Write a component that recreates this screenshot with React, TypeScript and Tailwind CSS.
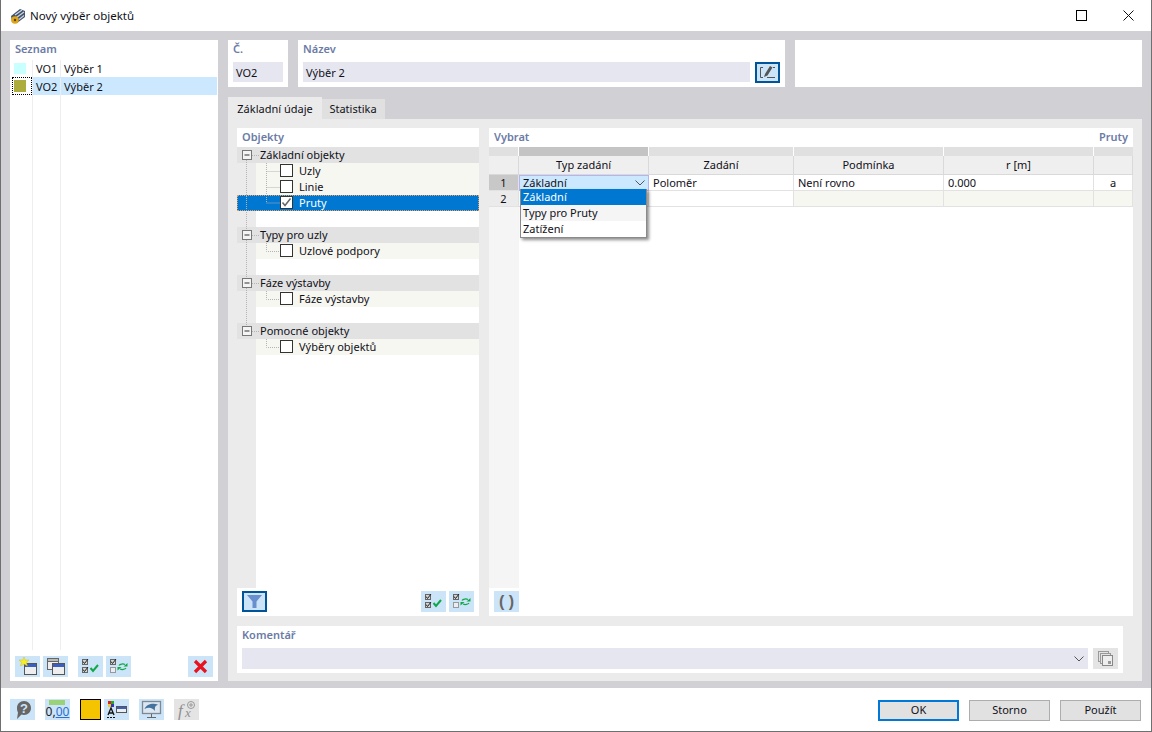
import React from 'react';

const IconBtn: React.FC<{ gray?: boolean; active?: boolean; className?: string; children?: React.ReactNode }> = ({ gray, active, className, children }) => (
  <div
    className={`w-[25px] h-[21px] flex items-center justify-center shrink-0 ${gray ? 'bg-[#e4e4e4]' : 'bg-[#cce4f7]'} ${active ? 'border-2 border-[#005499]' : ''} ${className || ''}`}
  >
    {children}
  </div>
);

const CheckAll = () => (
  <svg width="21" height="17" viewBox="0 0 21 17">
    <rect x="2.500" y="1.500" width="5" height="5" fill="#d4d4d4" stroke="#666" />
    <rect x="2.500" y="9.500" width="5" height="5" fill="#d4d4d4" stroke="#666" />
    <path d="M3 3.500l1.500 2L8 1M3 11.500l1.500 2L8 9" fill="none" stroke="#222" />
    <path d="M10.500 10l2.500 3 5-6" fill="none" stroke="#12a84a" strokeWidth="2" />
  </svg>
);

const CheckSwap = () => (
  <svg width="21" height="17" viewBox="0 0 21 17">
    <rect x="2.500" y="1.500" width="5" height="5" fill="#d4d4d4" stroke="#666" />
    <rect x="2.500" y="9.500" width="5" height="5" fill="#e8eef4" stroke="#999" />
    <path d="M3 3.500l1.500 2L8 1" fill="none" stroke="#222" />
    <path d="M11 7.500c1-1.500 4-2 6-1M18 10c-1 1.500-4 2-6 1" fill="none" stroke="#12a84a" strokeWidth="1.300" />
    <path d="M15.500 8.500h4v-3.500zM13.500 9h-4v3.500z" fill="#12a84a" />
  </svg>
);

const Windows = () => (
  <svg width="20" height="19" viewBox="0 0 20 19">
    <rect x="1.500" y="1.500" width="11" height="11" fill="#eee" stroke="#666" />
    <rect x="1.500" y="1.500" width="11" height="3" fill="#bbb" stroke="#666" />
    <rect x="6.500" y="6.500" width="12" height="11" fill="#eee" stroke="#555" />
    <rect x="7" y="7" width="11" height="3" fill="#3b5fc0" />
  </svg>
);

const NewWindow = () => (
  <svg width="20" height="19" viewBox="0 0 20 19">
    <rect x="6.500" y="6.500" width="12" height="11" fill="#eee" stroke="#555" />
    <rect x="7" y="7" width="11" height="3" fill="#3b5fc0" />
    <path d="M6 0l1.300 3.200L11 3 8.400 5.400 9.500 9 6 7 2.500 9l1.100-3.600L1 3l3.700.2z" fill="#f7ee2a" stroke="#c9b800" strokeWidth=".4" />
  </svg>
);

const Chevron = ({ color = '#555' }: { color?: string }) => (
  <svg width="10" height="6" viewBox="0 0 10 6">
    <path d="M.5.5L5 5 9.500.5" fill="none" stroke={color} />
  </svg>
);

const Label: React.FC<{ className?: string; children: React.ReactNode }> = ({ className, children }) => (
  <div className={`text-[#6b7ba6] font-semibold leading-[16px] ${className || ''}`}>{children}</div>
);

const GroupRow = ({ label }: { label: string }) => (
  <div className="h-[16px] bg-[#e2e2e2] flex items-center pl-[23px] pb-[2px] leading-none">{label}</div>
);

const ChildRow = ({ label, selected, checked }: { label: string; selected?: boolean; checked?: boolean }) => (
  <div
    className={`h-[16px] flex items-center pb-[2px] ${selected ? 'bg-[#0077d0] text-white outline-1 outline-dotted -outline-offset-1 outline-[#e9a05a]' : 'ml-[19px] bg-[#f7f7f2]'}`}
  >
    <div className={`${selected ? 'ml-[43px]' : 'ml-[24px]'} w-[13px] h-[13px] border border-[#333] bg-white flex items-center justify-center shrink-0`}>
      {checked && (
        <svg width="11" height="11" viewBox="0 0 11 11">
          <path d="M1.500 5.500l2.500 3 5.500-7" fill="none" stroke="#666" strokeWidth="1.500" />
        </svg>
      )}
    </div>
    <span className="ml-[6px] leading-none">{label}</span>
  </div>
);

const Blank = () => <div className="h-[16px]" />;

const TreeLines = () => (
  <svg className="absolute left-0 top-0 pointer-events-none" width="50" height="210" viewBox="0 0 50 210">
    <g fill="none" stroke="#b4b4b4" strokeDasharray="1 1">
      <path d="M9.500 13V181" />
      <path d="M15 8.500h7M15 88.500h7M15 136.500h7M15 184.500h7" />
      <path d="M29.500 16V56H43M29.500 24.500H43M29.500 40.500H43" />
      <path d="M29.500 96V104.500H43M29.500 144V152.500H43M29.500 192V200.500H43" />
    </g>
    {[3, 83, 131, 179].map(y => (
      <g key={y}>
        <rect x="5.500" y={y + 0.5} width="9" height="9" fill="#f4f4f4" stroke="#777" />
        <path d={`M7.500 ${y + 5}h5`} stroke="#333" />
      </g>
    ))}
  </svg>
);

const HeadCell: React.FC<{ className?: string; children?: React.ReactNode }> = ({ className, children }) => (
  <div className={`bg-[#efefef] border-r border-b border-[#d9d9d9] flex items-center justify-center h-[19px] pt-[1px] ${className || ''}`}>{children}</div>
);

const Cell: React.FC<{ className?: string; children?: React.ReactNode }> = ({ className, children }) => (
  <div className={`border-r border-b border-[#e2e2e2] flex items-center pl-[4px] pt-[1px] h-[16px] ${className || ''}`}>{children}</div>
);

const BottomIcons = () => (
  <div className="flex items-center pl-[9px] gap-[10px] h-full">
    <IconBtn>
      <svg width="20" height="20" viewBox="0 0 20 20">
        <path d="M11 1c4 0 7 3 7 7s-3 7-7 7c-1 0-1.800-.2-2.500-.5L4 19l1-6.500C4.300 11.300 4 9.700 4 8c0-4 3-7 7-7z" fill="#666" />
        <text x="11" y="13" textAnchor="middle" fontSize="13" fontWeight="700" fill="#cce4f7" fontFamily="Liberation Sans, sans-serif">?</text>
      </svg>
    </IconBtn>
    <IconBtn>
      <div className="flex flex-col items-center leading-none">
        <div className="w-[16px] h-[5px] bg-[#9ad27a]" />
        <div className="text-[12px] leading-[14px] text-[#222]">0,<span className="text-[#2a6fd0] underline">00</span></div>
      </div>
    </IconBtn>
    <div className="flex items-center gap-[3px]">
      <div className="w-[21px] h-[21px] bg-[#f5c400] border-[1.500px] border-black" />
      <IconBtn>
        <svg width="22" height="19" viewBox="0 0 22 19">
          <rect x="2" y="1" width="3" height="3" fill="#d22" />
          <rect x="5" y="1" width="3" height="3" fill="#2a2" />
          <rect x="2" y="4" width="3" height="3" fill="#ec3" />
          <rect x="5" y="4" width="3" height="3" fill="#33c" />
          <path d="M2 15l3-7 3 7M3 13h4" fill="none" stroke="#111" strokeWidth="1.300" />
          <path d="M1 17.500h9" stroke="#111" strokeDasharray="2 1" />
          <rect x="10.500" y="6.500" width="10" height="6" fill="#eee" stroke="#555" />
          <rect x="11" y="7" width="9" height="2" fill="#3b5fc0" />
        </svg>
      </IconBtn>
    </div>
    <IconBtn>
      <svg width="21" height="19" viewBox="0 0 21 19">
        <rect x="1.500" y="1.500" width="18" height="12" fill="#dbe6f0" stroke="#7d8894" strokeWidth="1.300" />
        <path d="M3.500 9c2-5 9-6.500 14-4-3 0-4 2-3.500 6-2-3-6-4.500-10.500-2z" fill="#44729f" />
        <path d="M10.500 14v3M6 17.500h9" stroke="#666" />
      </svg>
    </IconBtn>
    <IconBtn gray>
      <svg width="22" height="20" viewBox="0 0 22 20">
        <text x="2" y="16" fontSize="17" fontStyle="italic" fill="#8f8f8f" fontFamily="Liberation Serif, serif">f</text>
        <text x="9" y="17" fontSize="13" fontStyle="italic" fill="#8f8f8f" fontFamily="Liberation Serif, serif">x</text>
        <circle cx="15" cy="5" r="3.500" fill="none" stroke="#999" />
        <path d="M13 5h4M15 3v4" stroke="#999" />
      </svg>
    </IconBtn>
  </div>
);

const FootButton: React.FC<{ primary?: boolean; children: React.ReactNode }> = ({ primary, children }) => (
  <div
    className={`w-[81px] h-[21px] bg-[#e1e1e1] flex items-center justify-center ${primary ? 'border-2 border-[#0078d7]' : 'border border-[#adadad]'}`}
  >
    {children}
  </div>
);

export default function App() {
  return (
    <div className="w-[1152px] h-[732px] bg-white border-x border-b border-[#6f6f6f] flex flex-col overflow-hidden font-['Noto_Sans',sans-serif] text-[11px] text-[#101018]">
      {/* title bar */}
      <div className="h-[31px] flex items-center shrink-0 relative">
        <svg className="ml-[8px]" width="18" height="18" viewBox="0 0 18 18">
          <path d="M2 9L11 2l5 2 0 6-8 6-5-1z" fill="#44536b" />
          <path d="M6 8l7-5M7.500 10.500l7.500-5.500M10 12.500l5-4" stroke="#ccd8e8" strokeWidth="1.200" />
          <circle cx="6" cy="13" r="3.800" fill="#dea61b" />
          <circle cx="6" cy="13" r="1.200" fill="#5b4300" />
        </svg>
        <span className="ml-[3px] text-[11.500px] leading-none">Nový výběr objektů</span>
        <div className="ml-auto flex items-center gap-[36px] mr-[17px]">
          <div className="w-[11px] h-[11px] border-[1.500px] border-black" />
          <svg width="11" height="11" viewBox="0 0 11 11">
            <path d="M.5.5l10 10M10.500.5l-10 10" stroke="#111" />
          </svg>
        </div>
      </div>

      {/* main area */}
      <div className="h-[657px] bg-[#d0d0d5] flex gap-[10px] pl-[9px] pr-[9px] pt-[9px] pb-[7px] shrink-0">
        {/* Seznam */}
        <div className="w-[208px] bg-white flex flex-col relative shrink-0">
          <div className="h-[20px] pl-[5px] pt-[1px]"><Label>Seznam</Label></div>
          <div className="flex-1 flex min-h-0">
            <div className="w-[23px] border-r border-[#eeeeee] flex flex-col shrink-0">
              <div className="h-[17px] flex items-center pl-[4px]"><div className="w-[12px] h-[11px] bg-[#c8ffff]" /></div>
              <div className="h-[18px] ml-[2px] border border-dotted border-black flex items-center pl-[1px]"><div className="w-[12px] h-[12px] bg-[#adad3e]" /></div>
            </div>
            <div className="flex-1 flex flex-col">
              <div className="h-[17px] flex items-center leading-none">
                <span className="w-[28px] pl-[3px] border-r border-[#eeeeee] h-full flex items-center">VO1</span>
                <span className="pl-[3px]">Výběr 1</span>
              </div>
              <div className="h-[18px] flex items-center leading-none bg-[#cce8ff] mr-[1px] pt-[1px]">
                <span className="w-[28px] pl-[3px] border-r border-[#eeeeee] h-full flex items-center">VO2</span>
                <span className="pl-[3px]">Výběr 2</span>
              </div>
              <div className="flex-1 ml-[27px] w-[1px] bg-[#eeeeee]" />
            </div>
          </div>
          <div className="h-[31px] flex items-start pl-[5px] pt-[6px] shrink-0">
            <IconBtn><NewWindow /></IconBtn>
            <IconBtn className="ml-[3px]"><Windows /></IconBtn>
            <IconBtn className="ml-[10px]"><CheckAll /></IconBtn>
            <IconBtn className="ml-[3px]"><CheckSwap /></IconBtn>
            <IconBtn className="ml-[57px]">
              <svg width="15" height="15" viewBox="0 0 15 15">
                <path d="M2 2l11 11M13 2L2 13" stroke="#e8131f" strokeWidth="3.200" />
              </svg>
            </IconBtn>
          </div>
        </div>

        {/* right side */}
        <div className="flex-1 flex flex-col min-w-0">
          <div className="h-[47px] flex gap-[10px] shrink-0">
            <div className="w-[60px] bg-white px-[5px] pt-[1px]">
              <Label className="h-[21px]">Č.</Label>
              <div className="h-[20px] bg-[#e6e6f0] flex items-center pl-[3px] pt-[2px]">VO2</div>
            </div>
            <div className="w-[487px] bg-white px-[5px] pt-[1px] flex flex-col">
              <Label className="h-[21px]">Název</Label>
              <div className="flex gap-[5px]">
                <div className="flex-1 h-[20px] bg-[#e6e6f0] flex items-center pl-[3px] pt-[2px]">Výběr 2</div>
                <IconBtn active>
                  <svg width="19" height="15" viewBox="0 0 19 15">
                    <path d="M5 2.500H2.500v10H5M9 12.500h8M15 2.500h2" fill="none" stroke="#555" />
                    <path d="M6 12l1-3 5-8 2.500 1.500-5 8z" fill="#555" />
                  </svg>
                </IconBtn>
              </div>
            </div>
            <div className="flex-1 bg-white" />
          </div>

          {/* tabs */}
          <div className="h-[22px] mt-[10px] flex items-end shrink-0">
            <div className="w-[94px] h-[22px] bg-[#ebebeb] flex items-center justify-center pt-[2px]">Základní údaje</div>
            <div className="w-[63px] h-[20px] bg-[#e0e0e0] flex items-center justify-center pt-[1px] pr-[1px]">Statistika</div>
          </div>

          <div className="flex-1 bg-[#ebebeb] pl-[9px] pr-[9px] pt-[9px] pb-[8px] flex flex-col gap-[10px] min-h-0">
            <div className="h-[488px] flex gap-[10px] shrink-0">
              {/* Objekty */}
              <div className="w-[242px] bg-white flex flex-col shrink-0">
                <div className="h-[19px] pl-[5px] pt-[1px] shrink-0"><Label>Objekty</Label></div>
                <div className="flex-1 relative flex flex-col min-h-0">
                  <div className="absolute left-0 top-0 bottom-0 w-[19px] bg-[#ebebeb]" />
                  <div className="relative flex flex-col">
                    <GroupRow label="Základní objekty" />
                    <ChildRow label="Uzly" />
                    <ChildRow label="Linie" />
                    <ChildRow label="Pruty" selected checked />
                    <Blank />
                    <GroupRow label="Typy pro uzly" />
                    <ChildRow label="Uzlové podpory" />
                    <Blank />
                    <GroupRow label="Fáze výstavby" />
                    <ChildRow label="Fáze výstavby" />
                    <Blank />
                    <GroupRow label="Pomocné objekty" />
                    <ChildRow label="Výběry objektů" />
                    <TreeLines />
                  </div>
                </div>
                <div className="h-[28px] flex items-start pl-[5px] pr-[5px] pt-[3px] shrink-0">
                  <IconBtn active>
                    <svg width="15" height="13" viewBox="0 0 15 13">
                      <path d="M0 0h15L9.500 6.500V13h-4V6.500z" fill="#6a8fcf" />
                    </svg>
                  </IconBtn>
                  <IconBtn className="ml-auto"><CheckAll /></IconBtn>
                  <IconBtn className="ml-[3px]"><CheckSwap /></IconBtn>
                </div>
              </div>

              {/* Vybrat */}
              <div className="flex-1 bg-white flex flex-col min-w-0">
                <div className="h-[19px] px-[5px] pt-[1px] flex justify-between shrink-0">
                  <Label>Vybrat</Label>
                  <Label>Pruty</Label>
                </div>
                <div className="flex-1 relative flex flex-col min-h-0">
                  <div className="grid grid-cols-[30px_130px_145px_150px_150px_39px] shrink-0">
                    <div className="h-[9px] bg-[#e0e0e0] border-r border-white" />
                    <div className="h-[9px] bg-[#c4c4c4] border-r border-white" />
                    <div className="h-[9px] bg-[#e0e0e0] border-r border-white" />
                    <div className="h-[9px] bg-[#e0e0e0] border-r border-white" />
                    <div className="h-[9px] bg-[#e0e0e0] border-r border-white" />
                    <div className="h-[9px] bg-[#e0e0e0]" />

                    <HeadCell className="bg-[#ebebeb]" />
                    <HeadCell>Typ zadání</HeadCell>
                    <HeadCell>Zadání</HeadCell>
                    <HeadCell>Podmínka</HeadCell>
                    <HeadCell>r [m]</HeadCell>
                    <HeadCell />

                    <Cell className="bg-[#c8c8c8] justify-center !pl-0">1</Cell>
                    <Cell className="bg-[#cce8ff] justify-between pr-[3px] outline-1 -outline-offset-1 outline-[#b4b4ee]">
                      <span>Základní</span>
                      <Chevron />
                    </Cell>
                    <Cell>Poloměr</Cell>
                    <Cell>Není rovno</Cell>
                    <Cell>0.000</Cell>
                    <Cell className="justify-center !pl-0">a</Cell>

                    <Cell className="bg-[#ebebeb] justify-center !pl-0">2</Cell>
                    <Cell />
                    <Cell />
                    <Cell className="bg-[#f7f7f2]" />
                    <Cell className="bg-[#f7f7f2]" />
                    <Cell className="bg-[#f7f7f2]" />
                  </div>
                  <div className="flex-1 w-[30px] bg-[#f5f5f5]" />

                  {/* dropdown list */}
                  <div className="absolute left-[31px] top-[42px] w-[127px] bg-white border border-[#8a8a8a] border-t-0 shadow-[2px_2px_3px_rgba(0,0,0,0.45)] flex flex-col">
                    <div className="h-[16px] bg-[#0077d0] text-white flex items-center pl-[2px] pt-[1px]">Základní</div>
                    <div className="h-[16px] bg-[#f5f5f5] flex items-center pl-[2px] pt-[1px]">Typy pro Pruty</div>
                    <div className="h-[16px] flex items-center pl-[2px] pt-[1px]">Zatížení</div>
                  </div>
                </div>
                <div className="h-[28px] flex items-start pl-[5px] pt-[3px] shrink-0">
                  <IconBtn>
                    <span className="text-[16px] font-bold leading-none text-[#666] font-['Liberation_Sans',sans-serif]">( )</span>
                  </IconBtn>
                </div>
              </div>
            </div>

            {/* Komentář */}
            <div className="w-[886px] h-[47px] bg-white px-[5px] shrink-0">
              <Label className="h-[22px] pt-[1px]">Komentář</Label>
              <div className="flex gap-[5px]">
                <div className="flex-1 h-[21px] bg-[#e6e6f0] flex items-center justify-end pr-[4px]"><Chevron /></div>
                <IconBtn gray>
                  <svg width="17" height="17" viewBox="0 0 17 17">
                    <rect x="1.500" y="1.500" width="10" height="10" fill="none" stroke="#999" />
                    <rect x="3.500" y="3.500" width="10" height="10" fill="#e4e4e4" stroke="#999" />
                    <rect x="5.500" y="5.500" width="10" height="10" fill="#eee" stroke="#888" />
                    <rect x="11" y="11" width="3" height="3" fill="#999" />
                  </svg>
                </IconBtn>
              </div>
            </div>
          </div>
        </div>
      </div>

      {/* footer */}
      <div className="flex-1 flex items-center justify-between">
        <div className="h-[22px]"><BottomIcons /></div>
        <div className="flex gap-[10px] mr-[10px] mt-[1px]">
          <FootButton primary>OK</FootButton>
          <FootButton>Storno</FootButton>
          <FootButton>Použít</FootButton>
        </div>
      </div>
    </div>
  );
}
